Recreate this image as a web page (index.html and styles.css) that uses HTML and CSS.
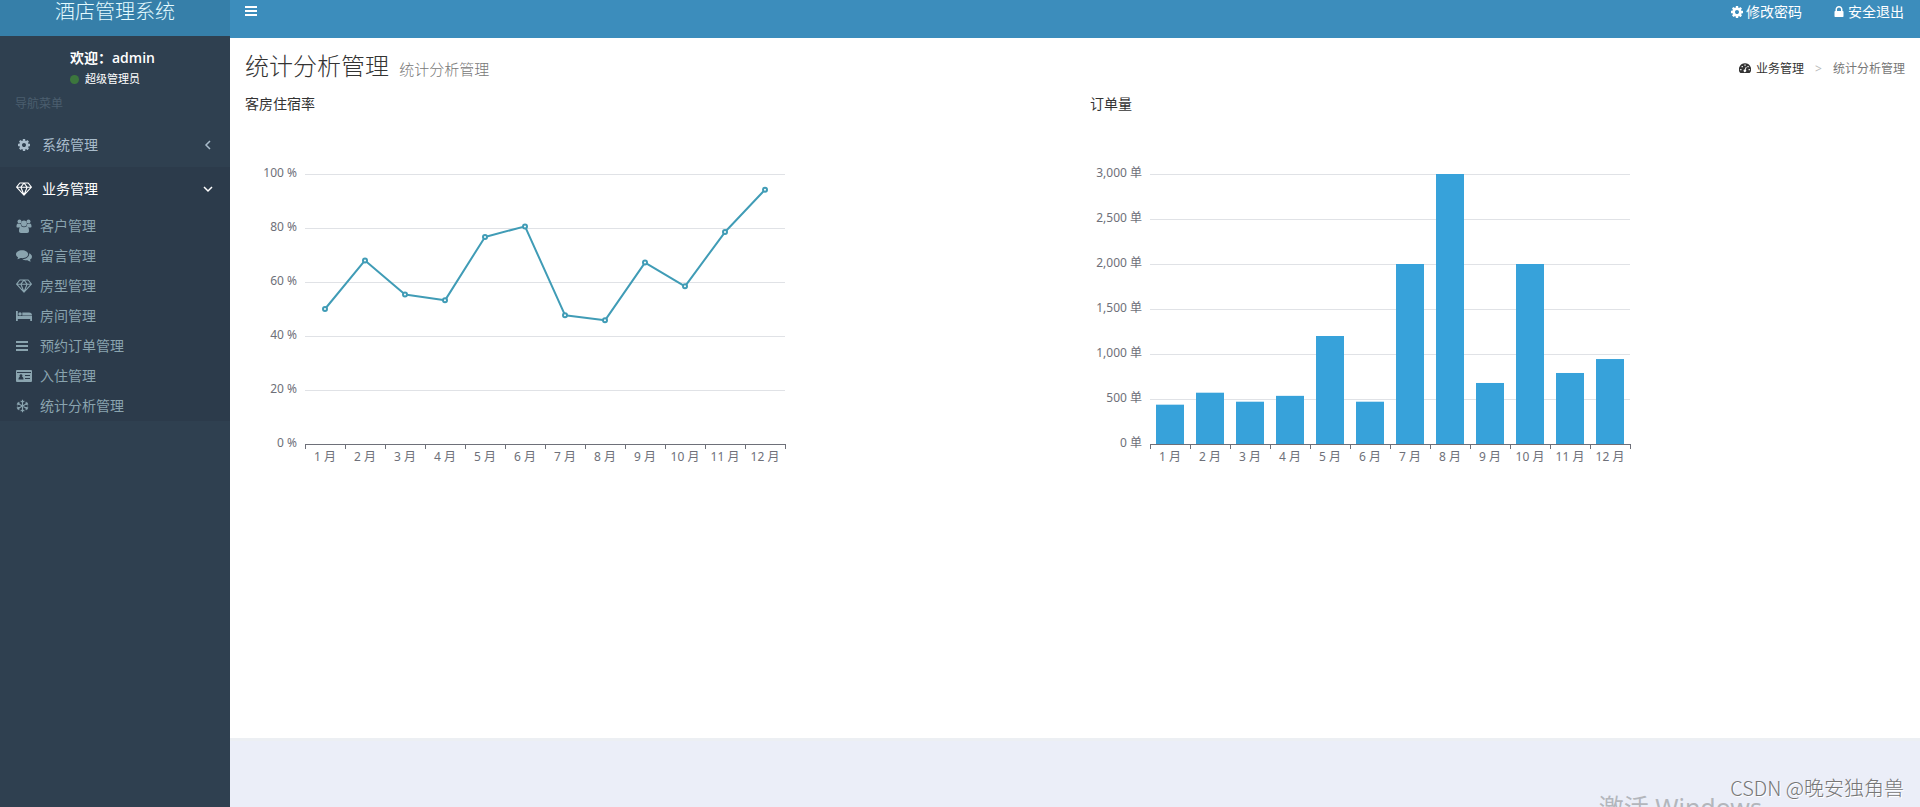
FILE: index.html
```html
<!DOCTYPE html>
<html lang="zh-CN">
<head>
<meta charset="utf-8">
<title>酒店管理系统</title>
<link rel="stylesheet" href="styles.css">
</head>
<body>
<svg class="sprite" aria-hidden="true">
  <symbol id="cog" viewBox="0 0 1792 1792"><path d="M1152 896q0-106-75-181t-181-75-181 75-75 181 75 181 181 75 181-75 75-181zm512-109v222q0 12-8 23t-20 13l-185 28q-19 54-39 91 35 50 107 138 10 12 10 25t-9 23q-27 37-99 108t-94 71q-12 0-26-9l-138-108q-44 23-91 38-16 136-29 186-7 28-36 28h-222q-14 0-24.500-8.500t-11.500-21.500l-28-184q-49-16-90-37l-141 107q-10 9-25 9-14 0-25-11-126-114-165-168-7-10-7-23 0-12 8-23 15-21 51-66.500t54-70.500q-27-50-41-99l-183-27q-13-2-21-12.500t-8-23.500v-222q0-12 8-23t19-13l186-28q14-46 39-92-40-57-107-138-10-12-10-24 0-10 9-23 26-36 98.500-107.500t94.500-71.500q13 0 26 10l138 107q44-23 91-38 16-136 29-186 7-28 36-28h222q14 0 24.500 8.500t11.500 21.500l28 184q49 16 90 37l142-107q9-9 24-9 13 0 25 10 129 119 165 170 7 8 7 22 0 12-8 23-15 21-51 66.500t-54 70.500q26 50 41 98l183 28q13 2 21 12.500t8 23.500z"/></symbol>
  <symbol id="lock" viewBox="0 0 1792 1792"><path d="M640 768h512v-192q0-106-75-181t-181-75-181 75-75 181v192zm832 96v576q0 40-28 68t-68 28h-960q-40 0-68-28t-28-68v-576q0-40 28-68t68-28h32v-192q0-184 132-316t316-132 316 132 132 316v192h32q40 0 68 28t28 68z"/></symbol>
  <symbol id="bars" viewBox="0 0 12 12"><path d="M0 1h12v2H0zM0 5h12v2H0zM0 9h12v2H0z"/></symbol>
  <symbol id="gem" viewBox="0 0 16 14"><path fill="none" stroke="currentColor" stroke-width="1.100" stroke-linejoin="round" d="M3.800 1h8.400l3.200 4.200L8 13.200.6 5.200zM.6 5.200h14.800M4.900 5.200L8 13l3.100-7.800M4.900 5.200L8 1l3.100 4.200"/></symbol>
  <symbol id="users" viewBox="0 0 15 14"><circle cx="3" cy="2.500" r="2"/><circle cx="12" cy="2.500" r="2"/><circle cx="7.500" cy="4.500" r="2.900"/><path d="M0 7.500C0 5.500.6 4.500 1.600 4.500c.8.500 1.800.600 2.600.300 0 1 .300 1.700.900 2.400C4 7.300 3.300 7.800 2.800 8.500H1C.3 8.500 0 8.100 0 7.500zM15 7.500c0-2-.6-3-1.600-3-.8.500-1.800.600-2.600.300 0 1-.3 1.700-.9 2.400 1.100.100 1.800.600 2.300 1.300H14c.700 0 1-.4 1-1zM2.500 12c0-3 .900-4.700 2.500-4.700 1.500 1.200 3.500 1.200 5 0 1.600 0 2.500 1.700 2.500 4.700 0 1.200-.7 2-1.900 2H4.400c-1.200 0-1.900-.8-1.900-2z"/></symbol>
  <symbol id="comments" viewBox="0 0 15 12"><path d="M5.700.500C2.500.500 0 2.200 0 4.400c0 1.200.8 2.300 2 3-.2.700-.5 1.200-.9 1.600 1.200-.1 2.300-.5 3.200-1.100 4 .6 7.100-1.100 7.100-3.500C11.400 2.200 8.900.5 5.700.5z"/><path d="M12.300 3.400c.5 3-2.300 5.400-6.300 5.600 1.200.9 3 1.300 4.800 1 .9.700 2 1.100 3.200 1.200-.4-.5-.7-1-.9-1.700 2.700-1.400 2.500-4.700-.8-6.100z"/></symbol>
  <symbol id="bed" viewBox="0 0 16 12"><path d="M0 1h1.800v5H16v5h-1.800V9H1.800v2H0zM6.300 2.500H13c2 0 3 1 3 3H6.300z"/><circle cx="4" cy="3.900" r="1.700"/></symbol>
  <symbol id="card" viewBox="0 0 16 12"><path fill-rule="evenodd" d="M1 0h14q1 0 1 1v10q0 1-1 1H1q-1 0-1-1V1q0-1 1-1zM1 2v1h14V2zM2.500 9.500h5c0-2-.7-2.500-1.500-2.500.9-1 .5-2.800-1-2.800S3.100 6 4 7c-.8 0-1.500.5-1.500 2.500zM9 5v1h5V5zM9 8v1h5V8z"/></symbol>
  <symbol id="snow" viewBox="0 0 14 14"><path fill="none" stroke="currentColor" stroke-width="1.200" d="M7 .300v13.400M1.200 3.700l11.600 6.600M12.800 3.700L1.200 10.300M5 1.500l2 1.600 2-1.600M5 12.500l2-1.600 2 1.600M.9 6l2.400-.9-.4-2.500M13.100 8l-2.400.9.400 2.500M13.100 6l-2.400-.9.400-2.500M.9 8l2.400.9-.4 2.500"/></symbol>
  <symbol id="dash" viewBox="0 0 14 12"><path fill-rule="evenodd" d="M7 0a7 7 0 0 1 6 10.800q-.3.500-.8.500H1.800q-.5 0-.8-.5A7 7 0 0 1 7 0zM1.400 6.500h1.500V8H1.400zM3 3h1.500v1.500H3zM6.300 1.400h1.500v1.500H6.300zM9.800 3h1.500v1.500H9.800zM11.200 6.500h1.500V8h-1.500zM8 4L6.700 7.200a1.500 1.500 0 1 0 1.100.3L9 4.300z"/></symbol>
  <symbol id="chevron" viewBox="0 0 10 10"><path fill="none" stroke="currentColor" stroke-width="1.500" d="M7 1L3 5l4 4"/></symbol>
</svg>
<div class="app">
  <aside class="sidebar">
    <a class="logo" href="#">酒店管理系统</a>
    <div class="user">
      <p class="user-name">欢迎：admin</p>
      <p class="user-role"><span class="status"></span>超级管理员</p>
    </div>
    <p class="nav-title">导航菜单</p>
    <nav>
      <a class="group" href="#"><svg class="icon"><use href="#cog"/></svg>系统管理<svg class="chevron"><use href="#chevron"/></svg></a>
      <div class="open">
        <a class="group active" href="#"><svg class="icon"><use href="#gem"/></svg>业务管理<svg class="chevron down"><use href="#chevron"/></svg></a>
        <a class="item" href="#"><svg class="icon"><use href="#users"/></svg>客户管理</a>
        <a class="item" href="#"><svg class="icon"><use href="#comments"/></svg>留言管理</a>
        <a class="item" href="#"><svg class="icon"><use href="#gem"/></svg>房型管理</a>
        <a class="item" href="#"><svg class="icon"><use href="#bed"/></svg>房间管理</a>
        <a class="item" href="#"><svg class="icon small"><use href="#bars"/></svg>预约订单管理</a>
        <a class="item" href="#"><svg class="icon"><use href="#card"/></svg>入住管理</a>
        <a class="item" href="#"><svg class="icon left"><use href="#snow"/></svg>统计分析管理</a>
      </div>
    </nav>
  </aside>
  <div class="page">
    <header class="navbar">
      <button class="toggle" type="button" aria-label="切换导航"><svg class="bars"><use href="#bars"/></svg></button>
      <div class="actions">
        <a href="#"><svg class="act"><use href="#cog"/></svg>修改密码</a>
        <a href="#"><svg class="act"><use href="#lock"/></svg>安全退出</a>
      </div>
    </header>
    <main class="content">
      <div class="heading">
        <h1>统计分析管理 <small>统计分析管理</small></h1>
        <div class="crumbs"><a href="#"><svg class="dash"><use href="#dash"/></svg>业务管理</a><span class="sep">&gt;</span><span>统计分析管理</span></div>
      </div>
      <div class="charts">
        <section><h2>客房住宿率</h2><svg class="chart" id="rate" viewBox="0 0 600 390"></svg></section>
        <section><h2>订单量</h2><svg class="chart" id="orders" viewBox="0 0 600 390"></svg></section>
      </div>
    </main>
    <footer class="footer">
      <span class="activate">激活 Windows</span>
      <span class="credit">CSDN @晚安独角兽</span>
    </footer>
  </div>
</div>
<script src="charts.js"></script>
</body>
</html>
```
FILE: styles.css
```css
* { box-sizing: border-box; }
body {
  margin: 0;
  font-family: "Noto Sans", "Noto Sans CJK SC", sans-serif;
  font-size: 14px;
  line-height: 20px;
  color: #333;
}
h1, h2, p { margin: 0; font-weight: 400; }
a { color: inherit; text-decoration: none; }
svg { fill: currentColor; flex: none; }
.sprite { display: none; }
.app { display: flex; min-height: 100vh; }

.sidebar { width: 230px; flex: none; background: #2f4050; color: #a9bccb; }
.logo {
  display: block;
  height: 36px;
  text-align: center;
  font-size: 20px;
  line-height: 24px;
  font-weight: 300;
  color: #e4fbff;
  background: #367fa9;
}
.user { padding: 12px 0 0 70px; color: #fff; }
.user-name { font-family: "Open Sans", "Noto Sans CJK SC", sans-serif; font-weight: 600; }
.user-role { display: flex; align-items: center; gap: 6px; font-size: 11px; line-height: 22px; }
.status { width: 9px; height: 9px; border-radius: 50%; background: #3c763d; }
.nav-title { padding: 4px 15px 9px; font-size: 12px; color: #4b5e6e; }
.group { display: flex; align-items: center; height: 44px; padding: 0 17px 0 16px; }
.icon { width: 16px; height: 14px; margin-right: 8px; }
.group .icon { margin-right: 10px; }
.small { height: 12px; width: 12px; margin-right: 12px; }
.left { width: 13px; margin-right: 11px; }
.open { background: #2c3b4b; }
.active { color: #fff; }
.chevron { width: 10px; height: 10px; margin-left: auto; }
.down { transform: rotate(-90deg); }
.item { display: flex; align-items: center; height: 30px; padding-left: 16px; color: #8aa4af; }

.page { flex: 1; min-width: 0; display: flex; flex-direction: column; }
.navbar {
  display: flex;
  justify-content: space-between;
  height: 38px;
  padding: 0 16px 14px 15px;
  background: #3c8dbc;
  color: #fff;
}
.toggle { display: flex; align-items: center; padding: 0 0 2px; border: 0; background: none; color: #fff; }
.bars { width: 12px; height: 12px; }
.actions { display: flex; gap: 30px; }
.actions a { display: flex; align-items: center; gap: 2px; }
.act { width: 14px; height: 14px; }

.content { flex: 1; background: #fff; }
.heading { display: flex; justify-content: space-between; align-items: center; padding: 12px 15px 0; }
h1 { font-size: 24px; line-height: 32px; font-weight: 300; }
h1 small { margin-left: 4px; font-size: 15px; color: #777; }
.crumbs { display: flex; align-items: center; font-size: 12px; color: #777; padding-top: 2px; }
.crumbs a { display: flex; align-items: center; gap: 5px; color: #333; }
.dash { width: 12px; height: 11px; }
.sep { padding: 0 11px; color: #bbb; }
.charts { display: grid; grid-template-columns: 1fr 1fr; padding-top: 9px; }
section { padding: 0 15px; }
h2 { font-size: 14px; line-height: 20px; }
.chart { display: block; width: 600px; max-width: 100%; }
.chart text { font-size: 12px; fill: #6e7079; }
.grid { stroke: #e0e2e6; }
.axis { stroke: #6e7079; fill: none; }
.line { fill: none; stroke: #409cb6; stroke-width: 2; stroke-linejoin: bevel; }
.dot { fill: #fff; stroke: #409cb6; stroke-width: 2; }
.bar { fill: #37a2da; }

.footer { position: relative; height: 69px; overflow: hidden; background: #ebeef8; border-top: 3px solid #eceff3; }
.activate { position: absolute; right: 158px; top: 48px; font-size: 25px; line-height: 36px; color: #b3b6bc; }
.credit {
  position: absolute;
  right: 16px;
  top: 33px;
  font-family: "Noto Sans CJK SC", sans-serif;
  font-size: 20px;
  line-height: 28px;
  font-weight: 300;
  color: #777;
  text-shadow: 1px 1px 0 #fff;
}
```
FILE: charts.js
```js
const LEFT = 60, TOP = 60, WIDTH = 480, HEIGHT = 270, STEP = WIDTH / 12;
const BASE = TOP + HEIGHT;

function add(svg, tag, attrs, text) {
  const el = document.createElementNS('http://www.w3.org/2000/svg', tag);
  for (const key in attrs) el.setAttribute(key, attrs[key]);
  if (text) el.textContent = text;
  svg.appendChild(el);
}

function frame(svg, max, step, unit) {
  for (let v = 0; v <= max; v += step) {
    const y = BASE - v / max * HEIGHT;
    if (v) add(svg, 'path', { class: 'grid', d: `M${LEFT} ${y + 0.5}h${WIDTH}` });
    add(svg, 'text', { x: 52, y: y + 3, 'text-anchor': 'end' }, `${v.toLocaleString('en-US')} ${unit}`);
  }
  for (let m = 0; m < 12; m++) {
    add(svg, 'text', { x: LEFT + STEP * (m + 0.5), y: BASE + 17, 'text-anchor': 'middle' }, `${m + 1} 月`);
  }
}

function axis(svg) {
  let d = `M${LEFT} ${BASE + 0.5}h${WIDTH + 1}`;
  for (let m = 0; m <= 12; m++) d += `M${LEFT + STEP * m + 0.5} ${BASE}v5`;
  add(svg, 'path', { class: 'axis', d });
}

const rate = document.getElementById('rate');
const rates = [50, 68, 55.4, 53.2, 76.7, 80.6, 47.7, 45.8, 67.2, 58.4, 78.5, 94.2];
const points = rates.map((v, i) => [LEFT + STEP * (i + 0.5), BASE - v / 100 * HEIGHT]);
frame(rate, 100, 20, '%');
axis(rate);
add(rate, 'polyline', { class: 'line', points: points.join(' ') });
points.forEach(([cx, cy]) => add(rate, 'circle', { class: 'dot', cx, cy, r: 2 }));

const orders = document.getElementById('orders');
const counts = [437, 570, 470, 535, 1200, 470, 2000, 3000, 678, 2000, 789, 944];
frame(orders, 3000, 500, '单');
counts.forEach((v, i) => {
  const height = v / 3000 * HEIGHT;
  add(orders, 'rect', { class: 'bar', x: LEFT + STEP * i + 6, y: BASE - height, width: 28, height });
});
axis(orders);
```
